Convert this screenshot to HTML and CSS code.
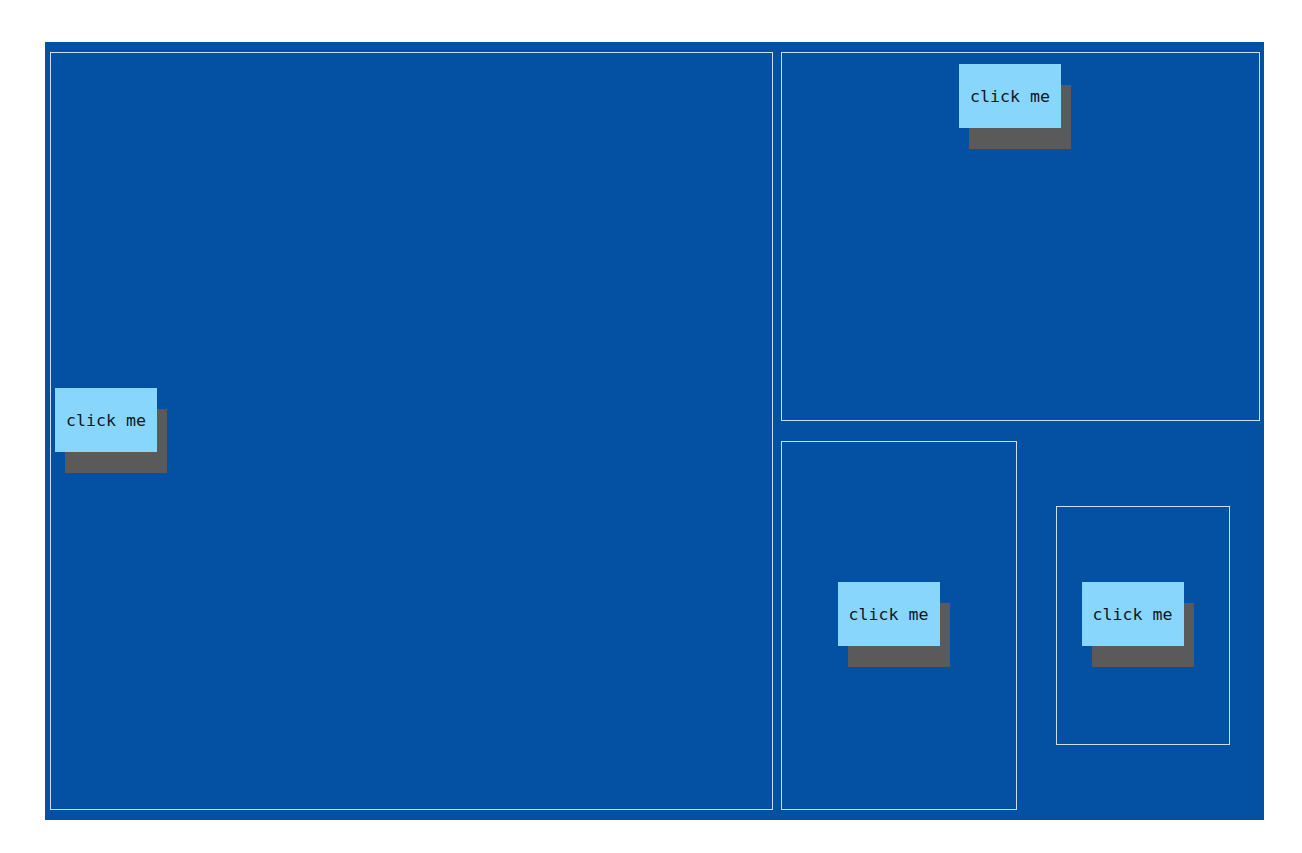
FILE: index.html
```html
<!DOCTYPE html>
<html>
<head>
<meta charset="utf-8">
<link rel="stylesheet" href="styles.css">
</head>
<body>
<div class="frame">
  <div class="box box-left">
    <button class="btn">click me</button>
  </div>
  <div class="col">
    <div class="box box-top">
      <button class="btn">click me</button>
    </div>
    <div class="row">
      <div class="box box-mid">
        <button class="btn">click me</button>
      </div>
      <div class="box box-small">
        <button class="btn">click me</button>
      </div>
    </div>
  </div>
</div>
</body>
</html>
```
FILE: styles.css
```css
html, body {
  margin: 0;
  padding: 0;
  background: #ffffff;
}
.frame {
  margin: 42px 0 0 45px;
  width: 1219px;
  height: 778px;
  box-sizing: border-box;
  padding: 10px 4px 10px 5px;
  background: #0451a3;
  display: flex;
  gap: 8px;
}
.box {
  box-sizing: border-box;
  border: 1px solid #cdddec;
  display: flex;
}
.box-left {
  width: 723px;
  height: 758px;
  align-items: center;
  padding-left: 4px;
  padding-bottom: 1px;
}
.col {
  width: 479px;
  display: flex;
  flex-direction: column;
  gap: 20px;
}
.box-top {
  height: 369px;
  justify-content: center;
  align-items: flex-start;
  padding-top: 11px;
}
.row {
  height: 369px;
  display: flex;
  align-items: center;
}
.box-mid {
  width: 236px;
  height: 369px;
  justify-content: center;
  align-items: center;
  padding-bottom: 2px;
}
.box-small {
  width: 174px;
  height: 239px;
  margin-left: 39px;
  justify-content: center;
  align-items: center;
  padding-bottom: 2px;
}
.btn {
  width: 102px;
  height: 64px;
  margin: 0 21px 21px 0;
  padding: 0;
  border: none;
  background: #89d6fc;
  color: #0a1826;
  font-family: "DejaVu Sans Mono", monospace;
  font-size: 16.6px;
  box-shadow: 10px 21px 0 #5a5a5a;
  flex: none;
}
```
